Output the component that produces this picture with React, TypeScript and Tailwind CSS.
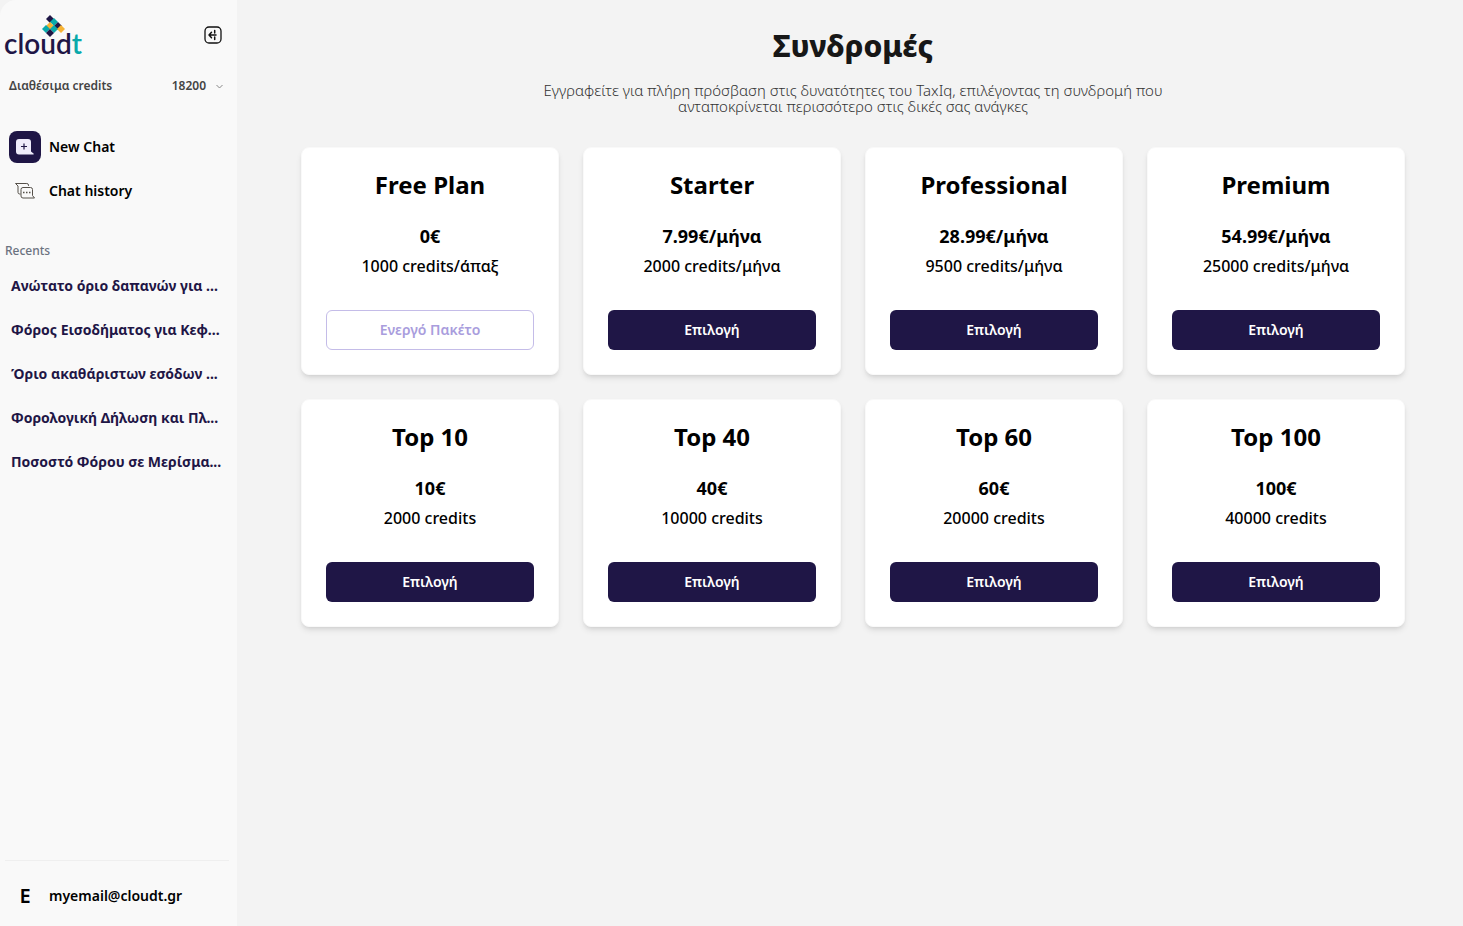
const recents = [
  'Ανώτατο όριο δαπανών για ...',
  'Φόρος Εισοδήματος για Κεφ...',
  'Όριο ακαθάριστων εσόδων ...',
  'Φορολογική Δήλωση και Πλ...',
  'Ποσοστό Φόρου σε Μερίσμα...',
]

const plans = [
  { title: 'Free Plan', price: '0€', credits: '1000 credits/άπαξ', active: true },
  { title: 'Starter', price: '7.99€/μήνα', credits: '2000 credits/μήνα' },
  { title: 'Professional', price: '28.99€/μήνα', credits: '9500 credits/μήνα' },
  { title: 'Premium', price: '54.99€/μήνα', credits: '25000 credits/μήνα' },
  { title: 'Top 10', price: '10€', credits: '2000 credits' },
  { title: 'Top 40', price: '40€', credits: '10000 credits' },
  { title: 'Top 60', price: '60€', credits: '20000 credits' },
  { title: 'Top 100', price: '100€', credits: '40000 credits' },
]

const NAVY = '#1f1646'
const TEAL = '#0aa9ab'
const AMBER = '#f7b334'

const tiles = [
  { x: 50, y: 6, fill: NAVY },
  { x: 54, y: 9, fill: TEAL },
  { x: 50, y: 13, fill: AMBER },
  { x: 58, y: 13, fill: NAVY },
  { x: 46, y: 16, fill: TEAL },
  { x: 54, y: 16, fill: TEAL },
  { x: 61, y: 16, fill: AMBER },
  { x: 50, y: 20, fill: NAVY },
]

function Logo() {
  return (
    <svg width="84" height="52" viewBox="4 0 84 52" role="img" aria-label="cloudt">
      {tiles.map((tile) => (
        <path key={`${tile.x}-${tile.y}`} d={`M${tile.x} ${tile.y - 4}l4 4-4 4-4-4z`} fill={tile.fill} />
      ))}
      <text x="4" y="41" fontFamily="Lato, sans-serif" fontSize="28" fontWeight="600" fill={NAVY}>
        cloud<tspan fill={TEAL}>t</tspan>
      </text>
    </svg>
  )
}

function CollapseIcon() {
  return (
    <svg width="20" height="20" viewBox="0 0 20 20" fill="none" stroke="#111" strokeLinecap="round">
      <rect x="2" y="2" width="16" height="16" rx="4" strokeWidth="1.3" />
      <path d="M6 10h7M8.500 7.300L6 10l2.500 2.700" strokeWidth="1.500" strokeLinejoin="round" />
      <path d="M11.700 5.500v2.500M11.700 12v2.500" strokeWidth="1.500" />
    </svg>
  )
}

function NewChatIcon() {
  return (
    <svg width="20" height="18" viewBox="0 0 20 18">
      <path d="M4 1h9a3 3 0 0 1 3 3v9.5l2.500 2c.5.5.2 1-.4 1H4a3 3 0 0 1-3-3V4a3 3 0 0 1 3-3z" fill="#efecfb" />
      <path d="M9 5.500v6M6 8.500h6" stroke={NAVY} strokeWidth="1.200" />
    </svg>
  )
}

function HistoryIcon() {
  return (
    <svg width="22" height="18" viewBox="0 0 22 18" fill="none" stroke="#555049" strokeLinejoin="round">
      <path d="M14.500 4V3.200A1.700 1.700 0 0 0 12.800 1.500H1.500L4 4v6.300A1.700 1.700 0 0 0 5.700 12H6.500" />
      <path d="M9 5.500h7.500a2 2 0 0 1 2 2v6l2 2.500H9a2 2 0 0 1-2-2v-6.500a2 2 0 0 1 2-2z" />
      <path d="M9 10.500h1.500M12 10.500h1.500M15 10.500h1.500" strokeWidth="1.300" />
    </svg>
  )
}

function Sidebar() {
  return (
    <aside className="flex w-[237px] shrink-0 flex-col rounded-tl-2xl bg-[#f9f9f9]">
      <div className="flex items-start justify-between pt-[13px] pr-[14px] pl-1">
        <Logo />
        <button type="button" aria-label="Collapse sidebar" className="mt-3">
          <CollapseIcon />
        </button>
      </div>

      <button
        type="button"
        className="mt-[11px] flex h-5 items-center pr-[14px] pl-[9px] text-xs font-semibold text-[#444]"
      >
        <span className="flex-1 text-left">Διαθέσιμα credits</span>
        <span>18200</span>
        <svg className="ml-[10px]" width="7" height="5" viewBox="0 0 7 5" fill="none" stroke="#888">
          <path d="M.5 1l3 3 3-3" />
        </svg>
      </button>

      <nav className="mt-[35px] flex flex-col gap-3 px-[9px] text-sm font-semibold text-black">
        <a href="#new" className="flex h-8 items-center gap-2">
          <span className="flex h-8 w-8 items-center justify-center rounded-lg bg-[#1f1646]">
            <NewChatIcon />
          </span>
          New Chat
        </a>
        <a href="#history" className="flex h-8 items-center gap-2">
          <span className="flex h-8 w-8 items-center justify-center">
            <HistoryIcon />
          </span>
          Chat history
        </a>
      </nav>

      <h2 className="mt-9 pl-[5px] text-xs leading-4 font-medium text-[#6b7280]">Recents</h2>
      <ul className="mt-[5px] pl-[11px] text-sm font-bold text-[#1f1646]">
        {recents.map((title) => (
          <li key={title} className="flex h-11 items-center whitespace-nowrap">
            <a href="#chat">{title}</a>
          </li>
        ))}
      </ul>

      <div className="mt-auto mr-2 ml-[5px] flex h-[66px] items-center border-t border-[#efefef] pt-1">
        <span className="w-10 text-center text-xl font-semibold text-black">E</span>
        <span className="ml-1 text-sm font-semibold text-black">myemail@cloudt.gr</span>
      </div>
    </aside>
  )
}

export default function App() {
  return (
    <div className="flex min-h-screen bg-[#f3f3f3] font-['Noto_Sans',sans-serif]">
      <Sidebar />
      <main className="flex-1 pt-7 pr-[58px] pb-8 pl-16">
        <header className="text-center">
          <h1 className="text-3xl leading-9 font-extrabold text-[#171717]">Συνδρομές</h1>
          <p className="mx-auto mt-[18px] max-w-[640px] text-[15px] leading-4 font-light text-[#333]">
            Εγγραφείτε για πλήρη πρόσβαση στις δυνατότητες του TaxIq, επιλέγοντας τη συνδρομή που ανταποκρίνεται
            περισσότερο στις δικές σας ανάγκες
          </p>
        </header>

        <section className="mt-[33px] grid grid-cols-4 gap-6">
          {plans.map((plan) => (
            <article
              key={plan.title}
              className="flex flex-col rounded-lg border border-[#f9f9f9] bg-white p-6 text-center text-black shadow-md"
            >
              <h2 className="text-2xl leading-[26px] font-bold">{plan.title}</h2>
              <p className="mt-6 text-lg leading-7 font-bold">{plan.price}</p>
              <p className="text-base leading-8 font-medium">{plan.credits}</p>
              {plan.active ? (
                <button
                  type="button"
                  disabled
                  className="mt-7 h-10 rounded-md border border-[#c4bce8] text-sm font-semibold text-[#a99ddd]"
                >
                  Ενεργό Πακέτο
                </button>
              ) : (
                <button type="button" className="mt-7 h-10 rounded-md bg-[#1f1646] text-sm font-semibold text-white">
                  Επιλογή
                </button>
              )}
            </article>
          ))}
        </section>
      </main>
    </div>
  )
}
